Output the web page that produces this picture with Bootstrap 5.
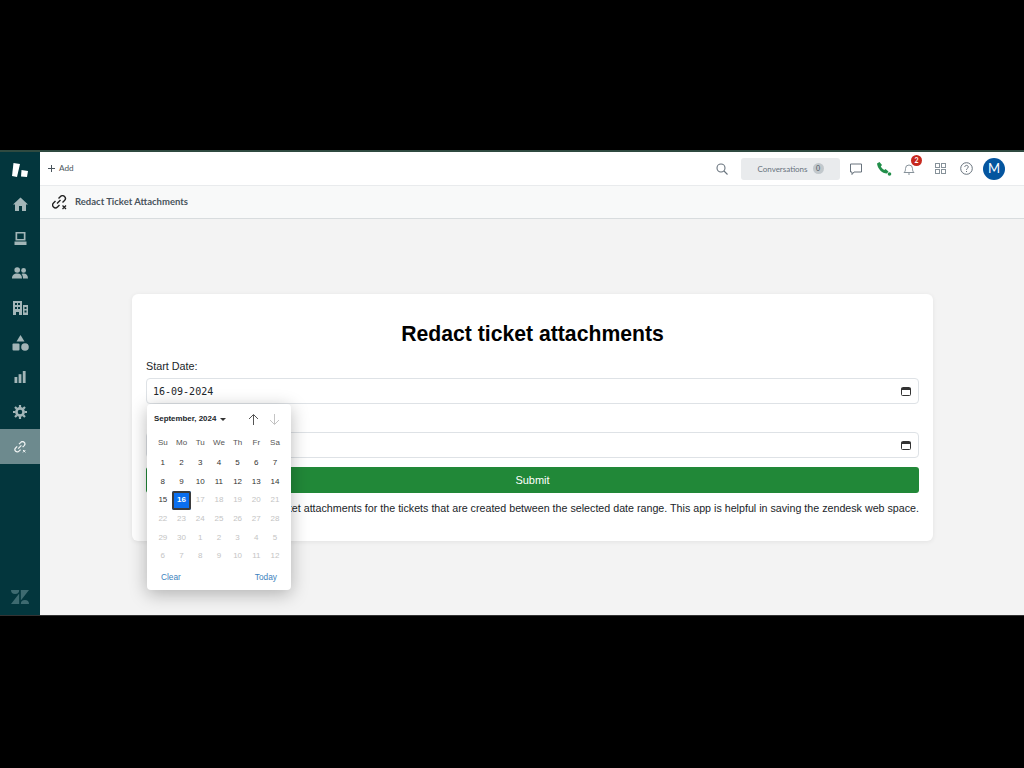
<!DOCTYPE html>
<html lang="en">
<head>
    <meta charset="UTF-8">
    <title>Redact Ticket Attachments</title>
    <link href="https://cdn.jsdelivr.net/npm/bootstrap@5.3.0/dist/css/bootstrap.min.css" rel="stylesheet">
    <style>
        html, body { height: 768px; overflow: hidden; }
        body { background: #000; font-family: "Liberation Sans", Arial, sans-serif; }
        .app-shell { margin-top: 150px; height: 466px; border-top: 2px solid #2f4a40; background: #f3f3f3; border-bottom: 1px solid #333; }
        .side-rail { width: 40px; background: #03363d; color: #a3b6b8; }
        .rail-item { height: 34.600px; width: 40px; }
        .rail-logo { height: 35px; }
        .rail-active { background: #6d8a8e; height: 35px; color: #f0f4f4; }
        .rail-foot { color: #3e6a70; height: 36px; }
        .top-strip { height: 34px; background: #fff; border-bottom: 1px solid #e9ebed; font-family: Lato, sans-serif; color: #49545c; }
        .add-link { font-size: 8.200px; padding-left: 8px; }
        .convo-btn { width: 99px; height: 22px; background: #e9ebed; border-radius: 3px; font-size: 8px; color: #68737d; gap: 5px; }
        .convo-count { width: 11px; height: 11px; font-size: 7px; background: #c2c8cc; border-radius: 50%; color: #49545c; }
        .bell-badge { top: -8px; left: 8px; width: 11px; height: 11px; background: #c7291f; border-radius: 50%; color: #fff; font-size: 7px; line-height: 11px; text-align: center; font-weight: 700; }
        .user-dot { width: 22px; height: 22px; background: #04559f; color: #fff; font-size: 13px; border-radius: 50%; margin: 0 19px 0 10px; }
        .ico-search { margin-right: 13px; }
        .ico-chat { margin: 0 14px 0 10px; }
        .ico-bell { margin: 0 20px 0 11px; }
        .ico-apps { margin-right: 14px; }
        .tab-strip { height: 33px; background: #f8f9f9; border-bottom: 1px solid #d8dcde; padding: 1px 0 0 12px; font-family: Lato, sans-serif; font-size: 9.500px; font-weight: 700; color: #49545c; }
        .app-pane { padding: 75px 91px 0 92px; }
        .form-card { height: 247px; background: #fff; border-radius: 6px; padding: 24px 14px 0; box-shadow: 0 1px 5px rgba(0,0,0,.07); }
        .form-title { font-size: 21.200px; font-weight: 700; color: #000; margin: 0 0 8px; line-height: 32px; }
        .field-label { font-size: 10.800px; line-height: 16px; color: #212529; margin-bottom: 4px; }
        .field-under { padding-left: 2px; margin-bottom: 3px; }
        .date-box { height: 26px; border: 1px solid #dee2e6; border-radius: 4px; padding: 0 7px 0 6px; font-family: "DejaVu Sans Mono", monospace; font-size: 10px; color: #212529; margin-bottom: 9px; }
        .send-btn { height: 25.500px; width: 100%; background: #218838; color: #fff; font-size: 11px; border: 0; border-radius: 3px; margin-top: 2px; }
        .note-line { font-size: 10.700px; line-height: 16px; margin: 7px 0 0; color: #212529; white-space: nowrap; text-align: right; }
        .pick-pop { position: absolute; left: 147px; top: 404px; width: 144px; height: 186px; background: #fff; border-radius: 4px; box-shadow: 0 4px 18px rgba(0,0,0,.28); padding: 0 6px; z-index: 5; }
        .pick-head { height: 29px; font-size: 7.900px; font-weight: 700; color: #212529; padding: 1px 0 0 1px; }
        .pick-grid { display: grid; grid-template-columns: repeat(7, 18.700px); grid-template-rows: 20.700px; grid-auto-rows: 18.700px; justify-content: start; margin-left: .5px; }
        .pick-grid span { display: flex; align-items: center; justify-content: center; font-size: 8px; color: #333; }
        .pick-grid .wk { color: #555; }
        .pick-grid .off { color: #c4c4c4; }
        .pick-grid .now { background: #0a6ff0; color: #fff; font-weight: 700; outline: 2px solid #3b3b3b; outline-offset: -2px; border-radius: 2px; }
        .pick-foot { font-size: 8.300px; color: #3d82bd; padding: 5px 8px 0 8px; }
        .arrow-up { margin-right: 10px; }
        .arrow-down { margin-right: 5px; }
    </style>
</head>
<body>
    <div class="app-shell d-flex">
        <div class="side-rail d-flex flex-column align-items-center flex-shrink-0">
            <div class="rail-logo d-flex align-items-center justify-content-center">
                <svg width="16" height="14" viewBox="0 0 16 14"><path d="M1.500 0 8 1 5 14 0 13z" fill="#fff"/><path d="M9.500 7 16 8 15 14 9 13.500z" fill="#fff"/></svg>
            </div>
            <div class="rail-item d-flex align-items-center justify-content-center">
                <svg width="15" height="14" viewBox="0 0 15 14" fill="currentColor"><path d="M7.500 .5 15 7.500h-2V14H9V9H6v5H2V7.500H0z"/></svg>
            </div>
            <div class="rail-item d-flex align-items-center justify-content-center">
                <svg width="13" height="13" viewBox="0 0 13 13" fill="currentColor" fill-rule="evenodd"><path d="M1.500 0h10v8.500h-10zM3.200 1.500v5.500h6.600V1.500zM.5 9.500h12V13H.5z"/></svg>
            </div>
            <div class="rail-item d-flex align-items-center justify-content-center">
                <svg width="16" height="12" viewBox="0 0 16 12" fill="currentColor"><circle cx="5.200" cy="3" r="2.800"/><circle cx="11.600" cy="3.400" r="2.400"/><path d="M0 11.500C0 8 2 6.500 5.200 6.500S10 8 10 11.500zM11 11.500c0-2-.5-3.600-1.500-4.600 3.500-1.200 6.500.4 6.500 4.600z"/></svg>
            </div>
            <div class="rail-item d-flex align-items-center justify-content-center">
                <svg width="15" height="14" viewBox="0 0 15 14" fill="currentColor" fill-rule="evenodd"><path d="M0 0h9v14H6v-3H3v3H0zM2 2v2h2V2zM5 2v2h2V2zM2 6v2h2V6zM5 6v2h2V6zM10 4h5v10h-5zM11.500 6v2h2V6zM11.500 9.500v2h2v-2z"/></svg>
            </div>
            <div class="rail-item d-flex align-items-center justify-content-center">
                <svg width="17" height="16" viewBox="0 0 17 16" fill="currentColor"><path d="M8.500 0 12.500 6.500h-8z"/><rect x=".5" y="8.500" width="7" height="7" rx="1"/><circle cx="13" cy="12" r="3.800"/></svg>
            </div>
            <div class="rail-item d-flex align-items-center justify-content-center">
                <svg width="12" height="12" viewBox="0 0 12 12" fill="currentColor"><rect x=".5" y="6" width="2.800" height="6"/><rect x="4.600" y="3.200" width="2.800" height="8.800"/><rect x="8.800" y="0" width="2.800" height="12"/></svg>
            </div>
            <div class="rail-item d-flex align-items-center justify-content-center">
                <svg width="14" height="14" viewBox="0 0 14 14" fill="none" stroke="currentColor"><circle cx="7" cy="7" r="3.600" stroke-width="2.600"/><path d="M7 0v2.400M7 11.600V14M0 7h2.400M11.600 7H14M2 2l1.800 1.800M10.200 10.200 12 12M2 12l1.800-1.800M10.200 3.800 12 2" stroke-width="2.200"/></svg>
            </div>
            <div class="rail-active w-100 d-flex align-items-center justify-content-center">
                <svg width="12" height="12" viewBox="0 0 12 12" fill="none" stroke="currentColor" stroke-width="1.200"><path d="M5 3.200 6.800 1.400a2.300 2.300 0 0 1 3.400 3.200L8.600 6.200M6.600 8.600 5 10.200a2.300 2.300 0 0 1-3.400-3.200L3.200 5.400M4.200 7.600 7.400 4.400"/><path d="M9 9l2.400 2.400M11.400 9 9 11.400" stroke-width="1"/></svg>
            </div>
            <div class="rail-foot mt-auto w-100 d-flex align-items-center justify-content-center">
                <svg width="18" height="14" viewBox="0 0 18 14" fill="currentColor"><path d="M8.200 3.600V14H0zM8.200 0a4.100 4.100 0 0 1-8.200 0zM9.800 14a4.100 4.100 0 0 1 8.200 0zM9.800 10.400V0H18z"/></svg>
            </div>
        </div>

        <div class="flex-grow-1 d-flex flex-column">
            <div class="top-strip d-flex align-items-center">
                <div class="add-link d-flex align-items-center gap-1">
                    <svg width="7" height="7" viewBox="0 0 7 7" stroke="#49545c"><path d="M3.500 0v7M0 3.500h7"/></svg>
                    <span>Add</span>
                </div>
                <div class="ms-auto d-flex align-items-center">
                    <svg class="ico-search" width="12" height="12" viewBox="0 0 12 12" fill="none" stroke="#68737d" stroke-width="1.100"><circle cx="5" cy="5" r="4"/><path d="M8 8l3.500 3.500"/></svg>
                    <div class="convo-btn d-flex align-items-center justify-content-center">
                        <span>Conversations</span>
                        <span class="convo-count d-flex align-items-center justify-content-center">0</span>
                    </div>
                    <svg class="ico-chat" width="12" height="12" viewBox="0 0 12 12" fill="none" stroke="#68737d"><path d="M.5 1h11v8H4l-2 2.500V9H.5z"/></svg>
                    <svg width="16" height="14" viewBox="0 0 16 14" fill="#228f4a"><path d="M1 1.500 3.500 0 6 3 4.800 4.500c.8 1.500 2 2.700 3.500 3.500L9.500 7l3 2.500-1.500 2C6 11.500 1.500 6.500 1 1.500z"/><circle cx="13.500" cy="12" r="1.800"/></svg>
                    <div class="position-relative ico-bell">
                        <svg class="d-block" width="12" height="12" viewBox="0 0 12 12" fill="none" stroke="#87929a"><path d="M1 9.500c1.200-1 1.500-2 1.500-4a3.500 3.500 0 0 1 7 0c0 2 .3 3 1.500 4zM5 11h2"/></svg>
                        <span class="bell-badge position-absolute">2</span>
                    </div>
                    <svg class="ico-apps" width="11" height="11" viewBox="0 0 11 11" fill="none" stroke="#87929a"><rect x=".5" y=".5" width="4" height="4"/><rect x="6.500" y=".5" width="4" height="4"/><rect x=".5" y="6.500" width="4" height="4"/><rect x="6.500" y="6.500" width="4" height="4"/></svg>
                    <svg width="13" height="13" viewBox="0 0 13 13" fill="none" stroke="#68737d"><circle cx="6.500" cy="6.500" r="5.800"/><path d="M4.800 5c0-2.200 3.500-2.200 3.500 0 0 1.300-1.800 1.300-1.800 2.800M6.500 9v1"/></svg>
                    <div class="user-dot d-flex align-items-center justify-content-center">M</div>
                </div>
            </div>
            <div class="tab-strip d-flex align-items-center gap-2">
                <svg width="15" height="15" viewBox="0 0 15 15" fill="none" stroke="#222" stroke-width="1.400"><path d="M6.500 3.500 8.500 1.500a2.800 2.800 0 0 1 4 4L10.500 7.500M7.500 10 5.500 12a2.800 2.800 0 0 1-4-4L3.500 6M5 8.500 8.500 5"/><path d="M10.500 10.500l3.500 3.500M14 10.500 10.500 14" stroke-width="1.300"/></svg>
                <span>Redact Ticket Attachments</span>
            </div>
            <div class="app-pane flex-grow-1">
                <div class="form-card">
                    <h1 class="form-title text-center">Redact ticket attachments</h1>
                    <div class="field-label">Start Date:</div>
                    <div class="date-box d-flex align-items-center justify-content-between">
                        <span>16-09-2024</span>
                        <svg width="10" height="10" viewBox="0 0 10 10" fill="none" stroke="#333"><rect x=".5" y="1.500" width="9" height="8" rx="1"/><path d="M.5 3h9" stroke-width="2"/></svg>
                    </div>
                    <div class="field-label field-under">End Date:</div>
                    <div class="date-box d-flex align-items-center justify-content-end">
                        <svg width="10" height="10" viewBox="0 0 10 10" fill="none" stroke="#333"><rect x=".5" y="1.500" width="9" height="8" rx="1"/><path d="M.5 3h9" stroke-width="2"/></svg>
                    </div>
                    <button class="send-btn d-block">Submit</button>
                    <p class="note-line">This app will redact ticket attachments for the tickets that are created between the selected date range. This app is helpful in saving the zendesk web space.</p>
                </div>
            </div>
        </div>
    </div>

    <div class="pick-pop">
        <div class="pick-head d-flex align-items-center">
            <span>September, 2024</span>
            <svg class="ms-1" width="6" height="3" viewBox="0 0 6 3" fill="#333"><path d="M0 0h6L3 3z"/></svg>
            <svg class="ms-auto arrow-up" width="11" height="11" viewBox="0 0 11 11" fill="none" stroke="#555"><path d="M5.500 11V.8M1 5l4.500-4.500L10 5"/></svg>
            <svg class="arrow-down" width="11" height="11" viewBox="0 0 11 11" fill="none" stroke="#c4c4c4"><path d="M5.500 0v10.200M1 6l4.500 4.500L10 6"/></svg>
        </div>
        <div class="pick-grid" id="days"></div>
        <div class="pick-foot d-flex justify-content-between">
            <span>Clear</span>
            <span>Today</span>
        </div>
    </div>

    <script src="https://cdn.jsdelivr.net/npm/bootstrap@5.3.0/dist/js/bootstrap.bundle.min.js"></script>
    <script>
        const grid = document.getElementById('days');
        let html = ['Su', 'Mo', 'Tu', 'We', 'Th', 'Fr', 'Sa'].map(d => `<span class="wk">${d}</span>`).join('');
        // september 2024 starts on a sunday, 42 cells in total
        for (let i = 1; i <= 42; i++) {
            const day = i <= 30 ? i : i - 30;
            let cls = '';
            if (i > 16) cls = 'off';
            if (i === 16) cls = 'now';
            html += `<span class="${cls}">${day}</span>`;
        }
        grid.innerHTML = html;
    </script>
</body>
</html>
